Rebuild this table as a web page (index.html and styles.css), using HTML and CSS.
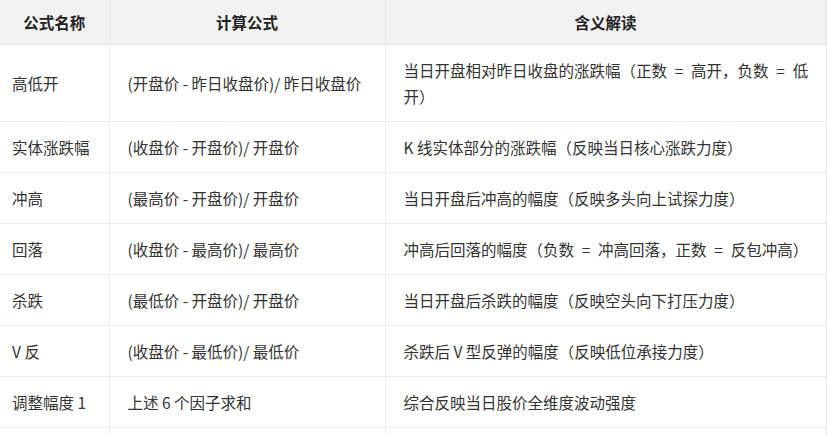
FILE: index.html
```html
<!DOCTYPE html>
<html lang="zh-CN">
<head>
<meta charset="utf-8">
<title>公式</title>
<link rel="stylesheet" href="styles.css">
</head>
<body>
<table class="factor-table">
  <colgroup>
    <col class="col-name">
    <col class="col-formula">
    <col class="col-meaning">
  </colgroup>
  <thead>
    <tr>
      <th>公式名称</th>
      <th>计算公式</th>
      <th>含义解读</th>
    </tr>
  </thead>
  <tbody>
    <tr>
      <td>高低开</td>
      <td>(开盘价 - 昨日收盘价)/ 昨日收盘价</td>
      <td>当日开盘相对昨日收盘的涨跌幅（正数&ensp;=&ensp;高开，负数&ensp;=&ensp;低开）</td>
    </tr>
    <tr>
      <td>实体涨跌幅</td>
      <td>(收盘价 - 开盘价)/ 开盘价</td>
      <td>K 线实体部分的涨跌幅（反映当日核心涨跌力度）</td>
    </tr>
    <tr>
      <td>冲高</td>
      <td>(最高价 - 开盘价)/ 开盘价</td>
      <td>当日开盘后冲高的幅度（反映多头向上试探力度）</td>
    </tr>
    <tr>
      <td>回落</td>
      <td>(收盘价 - 最高价)/ 最高价</td>
      <td>冲高后回落的幅度（负数&ensp;=&ensp;冲高回落，正数&ensp;=&ensp;反包冲高）</td>
    </tr>
    <tr>
      <td>杀跌</td>
      <td>(最低价 - 开盘价)/ 开盘价</td>
      <td>当日开盘后杀跌的幅度（反映空头向下打压力度）</td>
    </tr>
    <tr>
      <td>V 反</td>
      <td>(收盘价 - 最低价)/ 最低价</td>
      <td>杀跌后 V 型反弹的幅度（反映低位承接力度）</td>
    </tr>
    <tr>
      <td>调整幅度 1</td>
      <td>上述 6 个因子求和</td>
      <td>综合反映当日股价全维度波动强度</td>
    </tr>
    <tr class="row-empty">
      <td></td>
      <td></td>
      <td></td>
    </tr>
  </tbody>
</table>
</body>
</html>
```

FILE: styles.css
```css
html, body {
  margin: 0;
  padding: 0;
  background: #ffffff;
}

body {
  font-family: "Noto Sans CJK SC", "Noto Sans", sans-serif;
  font-size: 15.5px;
  color: #333333;
  overflow: hidden;
}

.factor-table {
  border-collapse: collapse;
  table-layout: fixed;
  width: 826px;
  border-right: 1px solid #e4e4e4;
}

.col-name { width: 109px; }
.col-formula { width: 276px; }
.col-meaning { width: 441px; }

.factor-table th {
  background: #f2f2f2;
  color: #222222;
  font-weight: 700;
  text-align: center;
  height: 44px;
  padding: 0 12px;
  line-height: 20px;
  border-left: 1px solid #e8e8e8;
  border-bottom: 1px solid #e6e6e6;
}

.factor-table td {
  padding: 12px 18px 12px 18px;
  line-height: 26px;
  vertical-align: middle;
  border-left: 1px solid #ececec;
  border-bottom: 1px solid #ececec;
  text-align: left;
}

.factor-table th:first-child,
.factor-table td:first-child {
  border-left: none;
}

.factor-table td:first-child {
  padding-left: 12px;
  padding-right: 8px;
}

.factor-table td:last-child {
  padding-right: 10px;
}

.row-empty td {
  height: 50px;
}
```
